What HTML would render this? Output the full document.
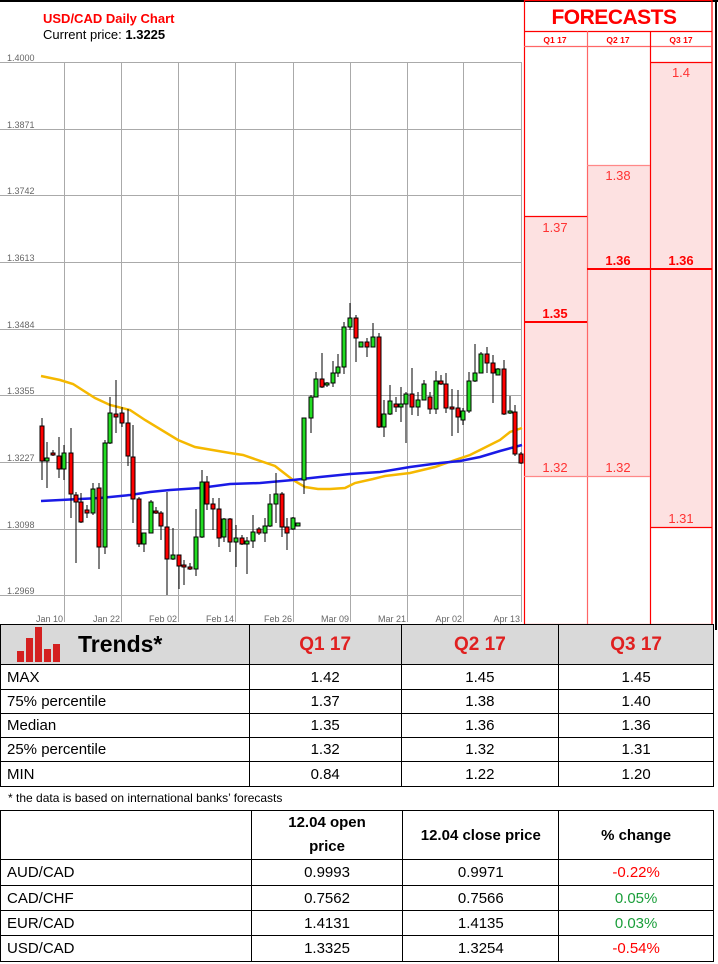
<!DOCTYPE html>
<html><head><meta charset="utf-8">
<style>
*{margin:0;padding:0;box-sizing:border-box}
body{width:718px;height:964px;background:#fff;position:relative;overflow:hidden;font-family:"Liberation Sans",sans-serif}
svg{position:absolute;left:0;top:0}
table{border-collapse:collapse;position:absolute;left:0;font-family:"Liberation Sans",sans-serif}
td{border:1.5px solid #000;font-size:15px;color:#000;text-align:center;padding:0}
td.l{text-align:left;padding-left:6px}
.note{position:absolute;left:8px;top:791px;font-size:12px;color:#000}
</style></head><body>
<svg width="718" height="630" viewBox="0 0 718 630">
<line x1="0" y1="1" x2="718" y2="1" stroke="#000" stroke-width="2"/>
<line x1="716" y1="0" x2="716" y2="630" stroke="#000" stroke-width="2"/>
<text x="43" y="23" font-size="13" font-weight="bold" fill="#f00">USD/CAD Daily Chart</text>
<text x="43" y="39" font-size="13" fill="#000">Current price: <tspan font-weight="bold">1.3225</tspan></text>
<g stroke="#aaa" stroke-width="1">
<line x1="0" y1="62.5" x2="521" y2="62.5"/><line x1="0" y1="129.5" x2="521" y2="129.5"/>
<line x1="0" y1="195.5" x2="521" y2="195.5"/><line x1="0" y1="262.5" x2="521" y2="262.5"/>
<line x1="0" y1="329.5" x2="521" y2="329.5"/><line x1="0" y1="395.5" x2="521" y2="395.5"/>
<line x1="0" y1="462.5" x2="521" y2="462.5"/><line x1="0" y1="529.5" x2="521" y2="529.5"/>
<line x1="0" y1="595.5" x2="521" y2="595.5"/>
<line x1="64.5" y1="62" x2="64.5" y2="622"/><line x1="121.5" y1="62" x2="121.5" y2="622"/>
<line x1="178.5" y1="62" x2="178.5" y2="622"/><line x1="235.5" y1="62" x2="235.5" y2="622"/>
<line x1="293.5" y1="62" x2="293.5" y2="622"/><line x1="350.5" y1="62" x2="350.5" y2="622"/>
<line x1="407.5" y1="62" x2="407.5" y2="622"/><line x1="463.5" y1="62" x2="463.5" y2="622"/>
<line x1="521.5" y1="62" x2="521.5" y2="622"/>
</g>
<g font-size="9" fill="#666">
<text x="7" y="61">1.4000</text><text x="7" y="128">1.3871</text><text x="7" y="194">1.3742</text>
<text x="7" y="261">1.3613</text><text x="7" y="328">1.3484</text><text x="7" y="394">1.3355</text>
<text x="7" y="461">1.3227</text><text x="7" y="528">1.3098</text><text x="7" y="594">1.2969</text>
</g>
<g font-size="9" fill="#666" text-anchor="end">
<text x="63" y="622">Jan 10</text><text x="120" y="622">Jan 22</text><text x="177" y="622">Feb 02</text>
<text x="234" y="622">Feb 14</text><text x="292" y="622">Feb 26</text><text x="349" y="622">Mar 09</text>
<text x="406" y="622">Mar 21</text><text x="462" y="622">Apr 02</text><text x="520" y="622">Apr 13</text>
</g>
<polyline fill="none" stroke="#f5b800" stroke-width="2.5" points="41,376 60,380 73,384 95,398 110,405 130,410 145,420 178,440 195,447 230,453 243,455 275,466 293,480 305,487 318,489 330,489 345,488 355,483 373,479 385,476 410,473 435,467 455,460 470,455 480,450 500,440 510,432 522,428"/>
<polyline fill="none" stroke="#1a1ae6" stroke-width="2.5" points="41,501 80,499 100,498 130,495 150,492 170,490 200,488 230,484 260,483 293,480 320,477 350,474 380,472 410,467 440,463 460,461 480,457 500,451 522,445"/>
<g stroke="#000" stroke-width="1">
<line x1="42" y1="418" x2="42" y2="480"/><rect x="40" y="426" width="4" height="35" fill="#f00"/>
<line x1="47" y1="442" x2="47" y2="488"/><rect x="45" y="458" width="4" height="3" fill="#2d2"/>
<line x1="53" y1="450" x2="53" y2="456"/><rect x="51" y="453" width="4" height="2" fill="#f00"/>
<line x1="59" y1="437" x2="59" y2="478"/><rect x="57" y="456" width="4" height="13" fill="#f00"/>
<line x1="64" y1="445" x2="64" y2="480"/><rect x="62" y="453" width="4" height="16" fill="#2d2"/>
<line x1="71" y1="428" x2="71" y2="518"/><rect x="69" y="453" width="4" height="41" fill="#f00"/>
<line x1="76" y1="492" x2="76" y2="563"/><rect x="74" y="495" width="4" height="7" fill="#f00"/>
<line x1="81" y1="493" x2="81" y2="523"/><rect x="79" y="502" width="4" height="20" fill="#f00"/>
<line x1="87" y1="505" x2="87" y2="518"/><rect x="85" y="510" width="4" height="3" fill="#f00"/>
<line x1="93" y1="483" x2="93" y2="515"/><rect x="91" y="489" width="4" height="24" fill="#2d2"/>
<line x1="99" y1="483" x2="99" y2="569"/><rect x="97" y="488" width="4" height="59" fill="#f00"/>
<line x1="105" y1="440" x2="105" y2="554"/><rect x="103" y="443" width="4" height="104" fill="#2d2"/>
<line x1="110" y1="397" x2="110" y2="444"/><rect x="108" y="413" width="4" height="30" fill="#2d2"/>
<line x1="116" y1="380" x2="116" y2="433"/><rect x="114" y="414" width="4" height="3" fill="#f00"/>
<line x1="122" y1="407" x2="122" y2="427"/><rect x="120" y="413" width="4" height="10" fill="#f00"/>
<line x1="128" y1="409" x2="128" y2="466"/><rect x="126" y="423" width="4" height="33" fill="#f00"/>
<line x1="133" y1="425" x2="133" y2="523"/><rect x="131" y="457" width="4" height="42" fill="#f00"/>
<line x1="139" y1="497" x2="139" y2="547"/><rect x="137" y="499" width="4" height="45" fill="#f00"/>
<line x1="144" y1="533" x2="144" y2="552"/><rect x="142" y="533" width="4" height="11" fill="#2d2"/>
<line x1="151" y1="500" x2="151" y2="533"/><rect x="149" y="502" width="4" height="31" fill="#2d2"/>
<line x1="156" y1="507" x2="156" y2="514"/><rect x="154" y="511" width="4" height="2" fill="#f00"/>
<line x1="161" y1="511" x2="161" y2="540"/><rect x="159" y="513" width="4" height="13" fill="#f00"/>
<line x1="167" y1="492" x2="167" y2="595"/><rect x="165" y="527" width="4" height="32" fill="#f00"/>
<line x1="173" y1="528" x2="173" y2="560"/><rect x="171" y="555" width="4" height="4" fill="#2d2"/>
<line x1="179" y1="555" x2="179" y2="589"/><rect x="177" y="555" width="4" height="11" fill="#f00"/>
<line x1="184" y1="560" x2="184" y2="585"/><rect x="182" y="565" width="4" height="2" fill="#f00"/>
<line x1="190" y1="563" x2="190" y2="570"/><rect x="188" y="567" width="4" height="2" fill="#f00"/>
<line x1="196" y1="509" x2="196" y2="576"/><rect x="194" y="537" width="4" height="32" fill="#2d2"/>
<line x1="202" y1="470" x2="202" y2="538"/><rect x="200" y="482" width="4" height="55" fill="#2d2"/>
<line x1="207" y1="476" x2="207" y2="510"/><rect x="205" y="482" width="4" height="22" fill="#f00"/>
<line x1="213" y1="498" x2="213" y2="530"/><rect x="211" y="504" width="4" height="5" fill="#f00"/>
<line x1="219" y1="498" x2="219" y2="547"/><rect x="217" y="509" width="4" height="29" fill="#f00"/>
<line x1="224" y1="518" x2="224" y2="542"/><rect x="222" y="519" width="4" height="18" fill="#2d2"/>
<line x1="230" y1="518" x2="230" y2="552"/><rect x="228" y="519" width="4" height="23" fill="#f00"/>
<line x1="236" y1="525" x2="236" y2="567"/><rect x="234" y="538" width="4" height="4" fill="#2d2"/>
<line x1="242" y1="535" x2="242" y2="545"/><rect x="240" y="538" width="4" height="6" fill="#f00"/>
<line x1="247" y1="537" x2="247" y2="574"/><rect x="245" y="541" width="4" height="3" fill="#2d2"/>
<line x1="253" y1="515" x2="253" y2="548"/><rect x="251" y="532" width="4" height="9" fill="#2d2"/>
<line x1="259" y1="527" x2="259" y2="535"/><rect x="257" y="529" width="4" height="4" fill="#f00"/>
<line x1="265" y1="518" x2="265" y2="542"/><rect x="263" y="526" width="4" height="7" fill="#2d2"/>
<line x1="270" y1="494" x2="270" y2="527"/><rect x="268" y="504" width="4" height="22" fill="#2d2"/>
<line x1="276" y1="473" x2="276" y2="523"/><rect x="274" y="494" width="4" height="10" fill="#2d2"/>
<line x1="282" y1="492" x2="282" y2="537"/><rect x="280" y="494" width="4" height="33" fill="#f00"/>
<line x1="287" y1="518" x2="287" y2="550"/><rect x="285" y="527" width="4" height="6" fill="#f00"/>
<line x1="293" y1="517" x2="293" y2="530"/><rect x="291" y="518" width="4" height="11" fill="#2d2"/>
<rect x="296" y="523" width="4" height="3" fill="#2d2"/>
<line x1="304" y1="418" x2="304" y2="494"/><rect x="302" y="418" width="4" height="62" fill="#2d2"/>
<line x1="311" y1="395" x2="311" y2="433"/><rect x="309" y="397" width="4" height="21" fill="#2d2"/>
<line x1="316" y1="372" x2="316" y2="397"/><rect x="314" y="379" width="4" height="18" fill="#2d2"/>
<line x1="322" y1="353" x2="322" y2="388"/><rect x="320" y="379" width="4" height="8" fill="#f00"/>
<line x1="327" y1="382" x2="327" y2="387"/><rect x="325" y="383" width="4" height="2" fill="#2d2"/>
<line x1="333" y1="361" x2="333" y2="387"/><rect x="331" y="373" width="4" height="10" fill="#2d2"/>
<line x1="338" y1="354" x2="338" y2="377"/><rect x="336" y="367" width="4" height="6" fill="#2d2"/>
<line x1="344" y1="322" x2="344" y2="374"/><rect x="342" y="327" width="4" height="40" fill="#2d2"/>
<line x1="350" y1="303" x2="350" y2="330"/><rect x="348" y="318" width="4" height="9" fill="#2d2"/>
<line x1="356" y1="315" x2="356" y2="362"/><rect x="354" y="318" width="4" height="20" fill="#f00"/>
<line x1="361" y1="342" x2="361" y2="347"/><rect x="359" y="342" width="4" height="5" fill="#2d2"/>
<line x1="367" y1="338" x2="367" y2="357"/><rect x="365" y="342" width="4" height="5" fill="#f00"/>
<line x1="373" y1="323" x2="373" y2="347"/><rect x="371" y="337" width="4" height="10" fill="#2d2"/>
<line x1="379" y1="333" x2="379" y2="428"/><rect x="377" y="337" width="4" height="90" fill="#f00"/>
<line x1="384" y1="400" x2="384" y2="437"/><rect x="382" y="414" width="4" height="13" fill="#2d2"/>
<line x1="390" y1="385" x2="390" y2="415"/><rect x="388" y="401" width="4" height="13" fill="#2d2"/>
<line x1="396" y1="397" x2="396" y2="412"/><rect x="394" y="404" width="4" height="3" fill="#f00"/>
<line x1="401" y1="387" x2="401" y2="422"/><rect x="399" y="404" width="4" height="3" fill="#2d2"/>
<line x1="406" y1="392" x2="406" y2="443"/><rect x="404" y="394" width="4" height="10" fill="#2d2"/>
<line x1="412" y1="368" x2="412" y2="415"/><rect x="410" y="394" width="4" height="13" fill="#f00"/>
<line x1="418" y1="392" x2="418" y2="416"/><rect x="416" y="400" width="4" height="7" fill="#2d2"/>
<line x1="424" y1="380" x2="424" y2="400"/><rect x="422" y="384" width="4" height="16" fill="#2d2"/>
<line x1="430" y1="392" x2="430" y2="414"/><rect x="428" y="397" width="4" height="12" fill="#f00"/>
<line x1="436" y1="371" x2="436" y2="414"/><rect x="434" y="381" width="4" height="28" fill="#2d2"/>
<line x1="441" y1="375" x2="441" y2="385"/><rect x="439" y="381" width="4" height="3" fill="#f00"/>
<line x1="446" y1="373" x2="446" y2="413"/><rect x="444" y="384" width="4" height="24" fill="#f00"/>
<line x1="452" y1="389" x2="452" y2="436"/><rect x="450" y="407" width="4" height="2" fill="#f00"/>
<line x1="458" y1="390" x2="458" y2="433"/><rect x="456" y="408" width="4" height="9" fill="#f00"/>
<line x1="463" y1="408" x2="463" y2="425"/><rect x="461" y="411" width="4" height="9" fill="#2d2"/>
<line x1="469" y1="372" x2="469" y2="413"/><rect x="467" y="381" width="4" height="30" fill="#2d2"/>
<line x1="475" y1="344" x2="475" y2="382"/><rect x="473" y="373" width="4" height="8" fill="#2d2"/>
<line x1="481" y1="352" x2="481" y2="373"/><rect x="479" y="354" width="4" height="19" fill="#2d2"/>
<line x1="487" y1="347" x2="487" y2="373"/><rect x="485" y="354" width="4" height="9" fill="#f00"/>
<line x1="493" y1="355" x2="493" y2="403"/><rect x="491" y="363" width="4" height="10" fill="#f00"/>
<line x1="498" y1="368" x2="498" y2="375"/><rect x="496" y="369" width="4" height="6" fill="#2d2"/>
<line x1="504" y1="360" x2="504" y2="415"/><rect x="502" y="369" width="4" height="45" fill="#f00"/>
<line x1="510" y1="396" x2="510" y2="414"/><rect x="508" y="411" width="4" height="2" fill="#2d2"/>
<line x1="515" y1="405" x2="515" y2="456"/><rect x="513" y="412" width="4" height="42" fill="#f00"/>
<line x1="521" y1="452" x2="521" y2="464"/><rect x="519" y="454" width="4" height="9" fill="#f00"/>
</g>
<!-- forecasts -->
<rect x="524" y="216" width="63" height="260" fill="#fde1e1"/>
<rect x="587" y="165" width="63" height="311" fill="#fde1e1"/>
<rect x="650" y="62" width="62" height="465" fill="#fde1e1"/>
<g stroke="#f00" stroke-width="1.2" fill="none">
<rect x="524.5" y="0.5" width="187.5" height="624"/>
<line x1="524" y1="31.5" x2="712" y2="31.5"/>
<line x1="524" y1="46.5" x2="712" y2="46.5" stroke="#f66"/>
<line x1="587.5" y1="31" x2="587.5" y2="624" stroke="#f66"/>
<line x1="650.5" y1="31" x2="650.5" y2="624"/>
<line x1="650" y1="62.5" x2="712" y2="62.5"/>
<line x1="587" y1="165.5" x2="650" y2="165.5" stroke="#f88"/>
<line x1="524" y1="216.5" x2="587" y2="216.5"/>
<line x1="524" y1="476.5" x2="650" y2="476.5" stroke="#f88"/>
<line x1="650" y1="527.5" x2="712" y2="527.5"/>
</g>
<line x1="524" y1="322" x2="587" y2="322" stroke="#f00" stroke-width="2"/>
<line x1="587" y1="269" x2="712" y2="269" stroke="#f00" stroke-width="2"/>
<text x="614" y="24" font-size="21" font-weight="bold" fill="#f00" text-anchor="middle" letter-spacing="-0.5">FORECASTS</text>
<g font-size="8.5" font-weight="bold" fill="#f00" text-anchor="middle">
<text x="555" y="43">Q1 17</text><text x="618" y="43">Q2 17</text><text x="681" y="43">Q3 17</text>
</g>
<g font-size="13" fill="#f33" text-anchor="middle">
<text x="681" y="77">1.4</text><text x="618" y="180">1.38</text><text x="555" y="232">1.37</text>
<text x="555" y="472">1.32</text><text x="618" y="472">1.32</text><text x="681" y="523">1.31</text>
</g>
<g font-size="13" font-weight="bold" fill="#f00" text-anchor="middle">
<text x="555" y="318">1.35</text><text x="618" y="265">1.36</text><text x="681" y="265">1.36</text>
</g>
</svg>
<table style="top:624px;width:714px">
<tr style="height:40px;background:#d9d9d9">
<td style="width:249px;text-align:left;position:relative">
<svg width="45" height="36" style="position:absolute;left:14px;top:2px">
<rect x="2" y="24" width="7" height="11" fill="#d42020"/><rect x="11" y="11" width="7" height="24" fill="#d42020"/>
<rect x="20" y="0" width="7" height="35" fill="#d42020"/><rect x="29" y="22" width="7" height="13" fill="#d42020"/>
<rect x="38" y="17" width="7" height="18" fill="#d42020"/>
</svg>
<span style="margin-left:77px;font-size:23px;font-weight:bold">Trends*</span></td>
<td style="width:152px;font-size:19px;font-weight:bold;color:#e02020">Q1 17</td>
<td style="width:158px;font-size:19px;font-weight:bold;color:#e02020">Q2 17</td>
<td style="width:155px;font-size:19px;font-weight:bold;color:#e02020">Q3 17</td></tr>
<tr style="height:25px"><td class="l">MAX</td><td>1.42</td><td>1.45</td><td>1.45</td></tr>
<tr style="height:24px"><td class="l">75% percentile</td><td>1.37</td><td>1.38</td><td>1.40</td></tr>
<tr style="height:24px"><td class="l">Median</td><td>1.35</td><td>1.36</td><td>1.36</td></tr>
<tr style="height:24px"><td class="l">25% percentile</td><td>1.32</td><td>1.32</td><td>1.31</td></tr>
<tr style="height:25px"><td class="l">MIN</td><td>0.84</td><td>1.22</td><td>1.20</td></tr>
</table>
<div class="note">* the data is based on international banks’ forecasts</div>
<table style="top:810px;width:714px">
<tr style="height:47px"><td style="width:251px"></td>
<td style="width:152px;font-weight:bold;line-height:24px">12.04 open<br>price</td>
<td style="width:156px;font-weight:bold">12.04 close price</td>
<td style="width:155px;font-weight:bold">% change</td></tr>
<tr style="height:26px"><td class="l">AUD/CAD</td><td>0.9993</td><td>0.9971</td><td style="color:#f00">-0.22%</td></tr>
<tr style="height:25px"><td class="l">CAD/CHF</td><td>0.7562</td><td>0.7566</td><td style="color:#1a9e3a">0.05%</td></tr>
<tr style="height:25px"><td class="l">EUR/CAD</td><td>1.4131</td><td>1.4135</td><td style="color:#1a9e3a">0.03%</td></tr>
<tr style="height:26px"><td class="l">USD/CAD</td><td>1.3325</td><td>1.3254</td><td style="color:#f00">-0.54%</td></tr>
</table>
</body></html>
